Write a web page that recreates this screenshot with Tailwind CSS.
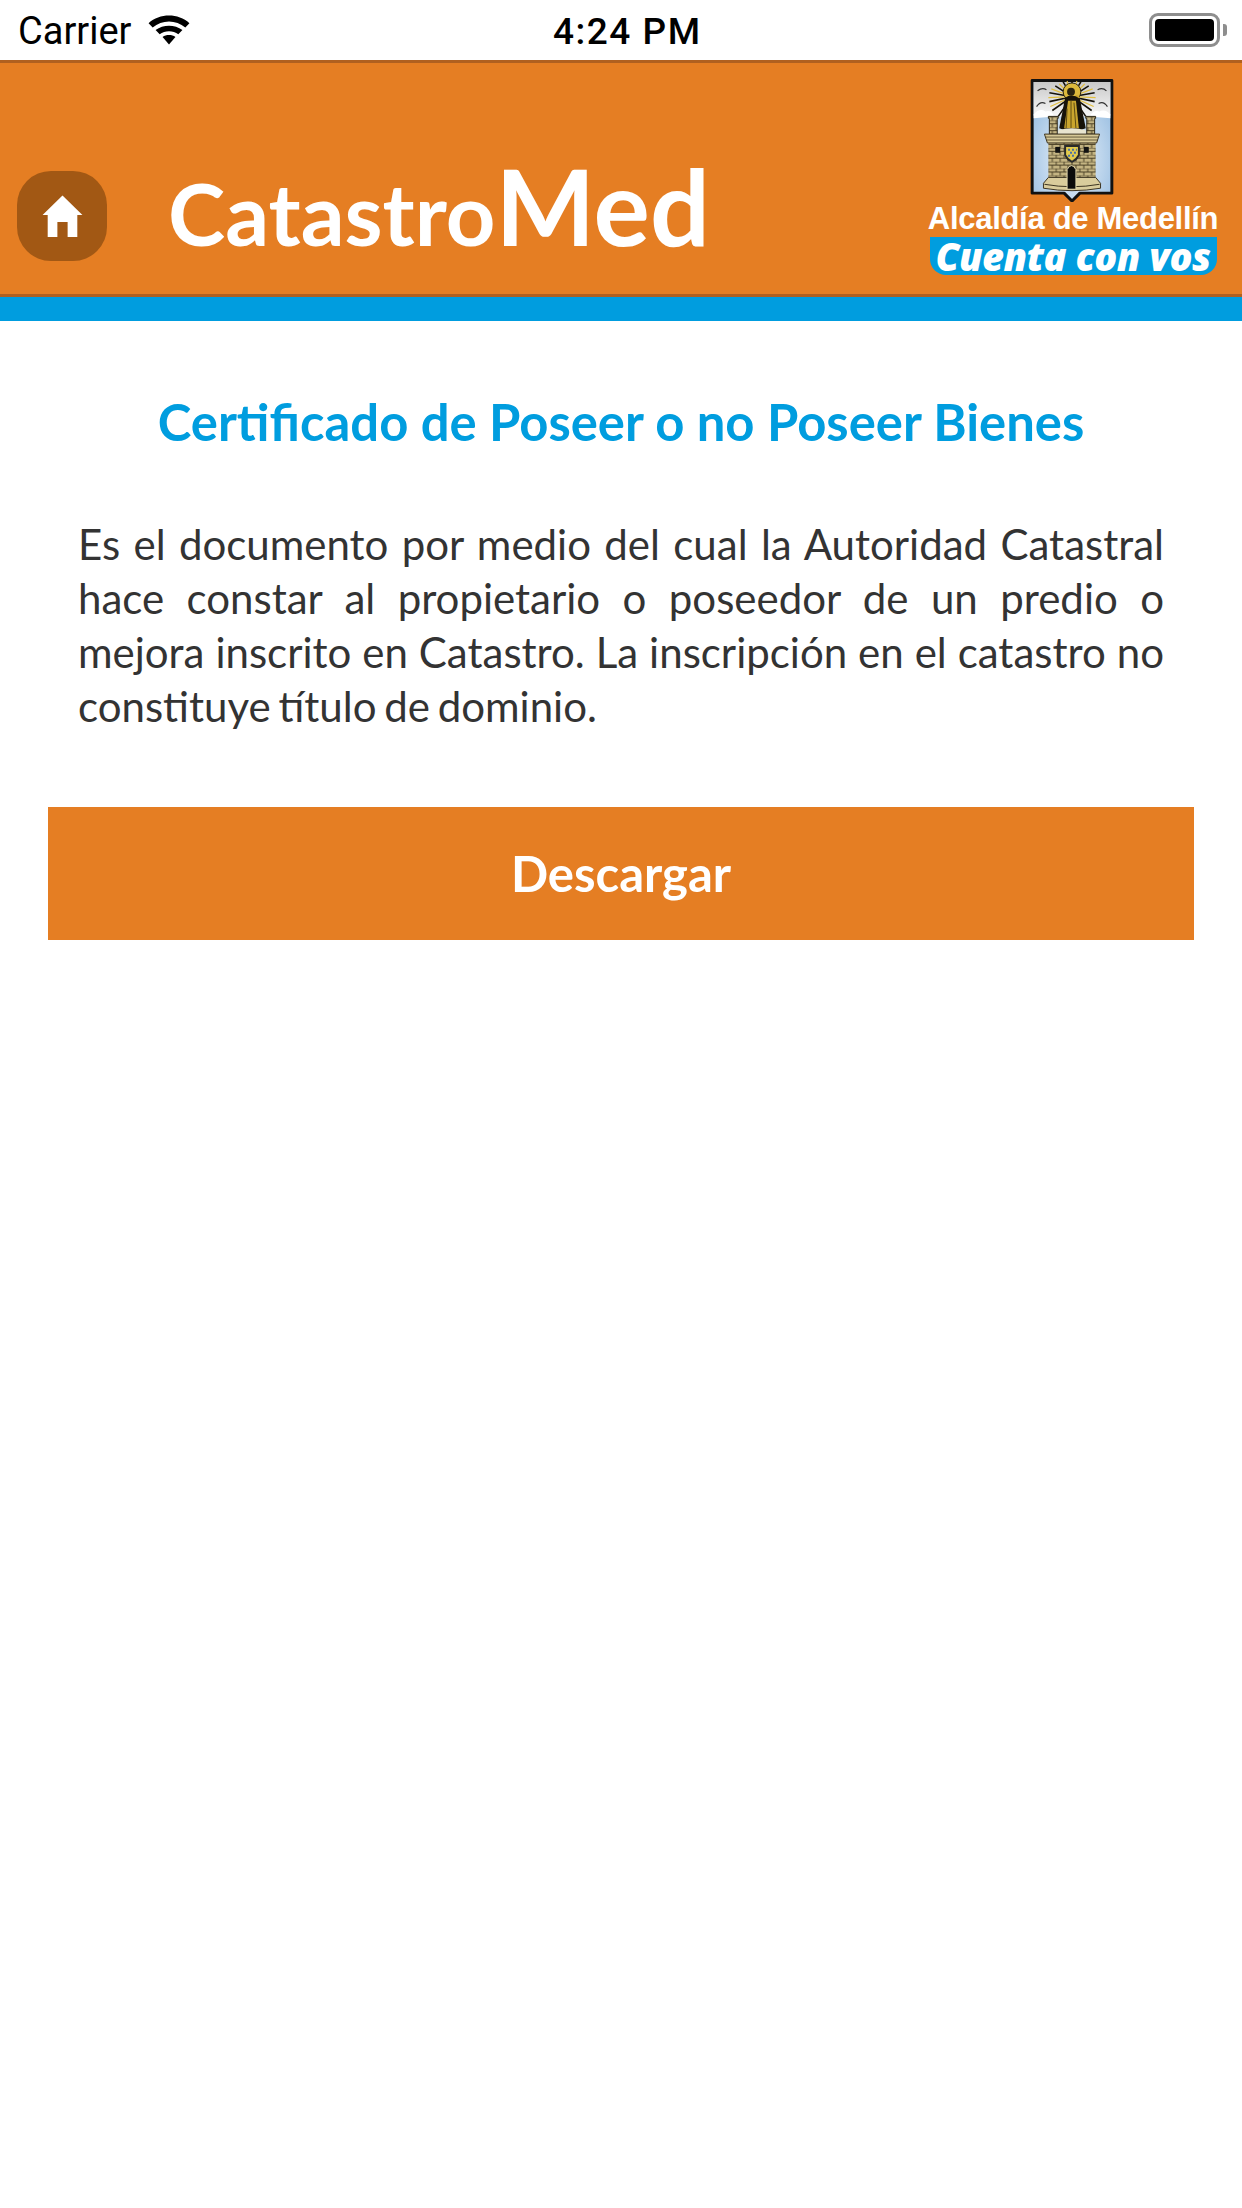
<!DOCTYPE html>
<html lang="es">
<head>
  <meta charset="UTF-8" />
  <meta name="viewport" content="width=device-width, initial-scale=1.0" />
  <title>CatastroMed</title>
  <script src="https://cdn.jsdelivr.net/npm/@tailwindcss/browser@4"></script>
</head>
<body class="bg-white font-['Lato',sans-serif] w-[1242px] h-[2208px] overflow-hidden">
  <!-- status bar -->
  <div class="h-[60px] flex items-center justify-between pl-[18px] pr-[15px] relative">
    <div class="flex items-center gap-[17px]">
      <span class="font-['Roboto',sans-serif] text-[38px] leading-[40px] text-black mt-[2px]">Carrier</span>
      <svg width="42" height="32" viewBox="0 0 36 30" preserveAspectRatio="none" class="-mt-[3px]">
        <path d="M0.5 9.5 C10 0 26 0 35.5 9.5 L32 13.5 C24 6 12 6 4 13.5 Z" fill="#000"/>
        <path d="M6.5 16 C13 10.5 23 10.5 29.5 16 L26 20 C21.5 16 14.5 16 10 20 Z" fill="#000"/>
        <path d="M12.5 22.5 C15.5 20 20.5 20 23.5 22.5 L18 29.5 Z" fill="#000"/>
      </svg>
    </div>
    <span class="absolute left-[553px] top-[12px] font-['Roboto',sans-serif] font-medium text-[37px] leading-[40px] tracking-[1.5px] text-black">4:24 PM</span>
    <div class="flex items-center gap-[3px]">
      <div class="w-[71px] h-[34px] rounded-[9px] border-[3px] border-[#8e8e8e] p-[3px]">
        <div class="w-full h-full rounded-[4px] bg-black"></div>
      </div>
      <div class="w-[4px] h-[12px] rounded-r-[3px] bg-[#8e8e8e]"></div>
    </div>
  </div>

  <!-- header -->
  <header class="h-[237px] bg-[#e57e23] border-t-[3px] border-b-[3px] border-[#b0601f] relative flex items-end pb-[33px] pl-[17px]">
    <button class="w-[90px] h-[90px] rounded-[34px] bg-[#a25814] flex items-center justify-center">
      <svg width="41" height="43" viewBox="0 0 36 43" preserveAspectRatio="none">
        <path d="M18 0.5 L35.5 20 L31 20 L31 42 L22.500 42 L22.500 27 L13.500 27 L13.500 42 L5 42 L5 20 L0.5 20 Z" fill="#fff"/>
      </svg>
    </button>
    <h1 class="ml-[61px] mb-[-10px] text-white font-bold text-[86.500px] leading-[116px] whitespace-nowrap">Catastro<span class="text-[105.500px] font-bold">Med</span></h1>

    <!-- logo -->
    <div class="absolute left-[928px] top-[16px] w-[290px] flex flex-col items-center">
      <svg width="84" height="123" viewBox="0 0 84 125" class="-ml-[3px]">
        <defs>
          <radialGradient id="cielo" cx="50%" cy="65%" r="60%">
            <stop offset="0%" stop-color="#eef4fb"/>
            <stop offset="100%" stop-color="#9fc2e3"/>
          </radialGradient>
          <linearGradient id="nube" x1="0" y1="0" x2="0" y2="1">
            <stop offset="0%" stop-color="#c9c9c9"/>
            <stop offset="100%" stop-color="#f7f7f7"/>
          </linearGradient>
          <pattern id="ladrillo" width="8" height="7" patternUnits="userSpaceOnUse">
            <rect width="8" height="7" fill="#c4b482"/>
            <path d="M0 0 H8 M0 3.500 H8 M2 0 V3.500 M6 3.500 V7" stroke="#4a4026" stroke-width="1"/>
          </pattern>
        </defs>
        <path d="M1.500 1.500 H82.500 V116 H50 L42 124 L34 116 H1.500 Z" fill="url(#cielo)" stroke="#111" stroke-width="3" stroke-linejoin="round"/>
        <path d="M3 3 H81 V37 Q70 30 60 38 H24 Q14 30 3 37 Z" fill="url(#nube)"/>
        <path d="M7 12 Q12 8 16 11 M6 28 Q10 22 15 25 M68 11 Q73 8 77 12 M69 25 Q74 22 78 28" stroke="#333" stroke-width="1.200" fill="none"/>
        <path d="M3 36 Q9 29 15 33 Q21 31 24 38 L3 40 Z M60 38 Q64 31 70 33 Q76 30 81 36 V40 Z" fill="#fff"/>
        <g stroke="#15120a" stroke-width="1.600">
          <path d="M42 18 L42 2 M42 18 L33 3 M42 18 L51 3 M42 18 L25 7 M42 18 L59 7 M42 18 L19 14 M42 18 L65 14 M42 18 L19 23 M42 18 L65 23 M42 18 L22 32 M42 18 L62 32 M42 18 L28 38 M42 18 L56 38"/>
        </g>
        <g stroke="#e2bf3f" stroke-width="1.200">
          <path d="M42 18 L37 2 M42 18 L47 2 M42 18 L29 5 M42 18 L55 5 M42 18 L21 10 M42 18 L63 10 M42 18 L18 19 M42 18 L66 19 M42 18 L20 28 M42 18 L64 28"/>
        </g>
        <circle cx="42" cy="13" r="9" fill="#dcb93c" stroke="#2a2411" stroke-width="1"/>
        <circle cx="41" cy="13" r="4" fill="#2a2411"/>
        <circle cx="47" cy="19" r="2.500" fill="#c9a52e"/>
        <path d="M35 19 Q42 14 50 20 L56 50 Q42 56 29 50 Z" fill="#17130a"/>
        <path d="M38 22 H46 L49 50 H34 Z" fill="#c9a52e"/>
        <path d="M41 22 V50 M44 24 L46 50 M37 30 L36 50" stroke="#5d4a12" stroke-width="1"/>
        <path d="M18 38 H28 V40 H27 V56 H19 V40 H18 Z M56 38 H66 V40 H65 V56 H57 V40 H56 Z" fill="url(#ladrillo)" stroke="#2c2614" stroke-width="1"/>
        <path d="M28 52 Q42 48 56 52 V56 H28 Z" fill="#e8e4cf"/>
        <path d="M18 64 H66 V102 H18 Z" fill="url(#ladrillo)"/>
        <path d="M14 56 H70 L67 65 H17 Z" fill="#d6c896" stroke="#3a3220" stroke-width="1"/>
        <path d="M15 59 H69 M16 62 H68" stroke="#4a4026" stroke-width="0.800"/>
        <path d="M18 100 L13 106 V111 Q42 116 71 111 V106 L66 100 Z" fill="#d9cc9c" stroke="#3a3220" stroke-width="1"/>
        <path d="M14 107 Q42 112 70 107" stroke="#3a3220" stroke-width="1" fill="none"/>
        <path d="M37 112 V92 Q41.500 84 46 92 V112 Z" fill="#0b0b0b" stroke="#e4d9ae" stroke-width="1"/>
        <path d="M34 67 H50 V77 Q48 83 42 85 Q36 83 34 77 Z" fill="#2a2a2a"/>
        <path d="M36 69 H48 V77 Q46 81 42 83 Q38 81 36 77 Z" fill="#e2cb4d"/>
        <path d="M38 71 H40 V73 H38 Z M42 71 H44 V73 H42 Z M46 71 H47 V73 H46 Z M40 74 H42 V76 H40 Z M44 74 H46 V76 H44 Z M38 77 H40 V79 H38 Z M42 77 H44 V79 H42 Z" fill="#4a6fa8"/>
        <rect x="25" y="69" width="5" height="6" fill="#111"/>
        <rect x="54" y="69" width="5" height="6" fill="#111"/>
      </svg>
      <div class="font-['Liberation_Sans',sans-serif] font-bold text-white text-[31px] leading-[33px] tracking-[-0.3px] whitespace-nowrap">Alcaldía de Medellín</div>
      <div class="w-[287px] h-[38px] mt-[2px] bg-[#009ddf] rounded-b-[16px] flex items-center justify-center font-['Open_Sans',sans-serif] font-extrabold italic text-white text-[38px] leading-[38px] tracking-[-0.5px] whitespace-nowrap">Cuenta con vos</div>
    </div>
  </header>
  <div class="h-[24px] bg-[#009ddf]"></div>

  <!-- content -->
  <main class="pt-[71px] px-[48px]">
    <h2 class="text-center text-[#009ddf] font-bold text-[50.800px] leading-[60px] whitespace-nowrap">Certificado de Poseer o no Poseer Bienes</h2>
    <p class="mt-[65px] mx-[30px] text-[#333333] text-[42px] leading-[54px] text-justify [word-spacing:-3px]">Es el documento por medio del cual la Autoridad Catastral hace constar al propietario o poseedor de un predio o mejora inscrito en Catastro. La inscripción en el catastro no constituye título de dominio.</p>
    <button class="mt-[74px] w-[1146px] h-[133px] bg-[#e57e23] text-white font-bold text-[49px]">Descargar</button>
  </main>
</body>
</html>
